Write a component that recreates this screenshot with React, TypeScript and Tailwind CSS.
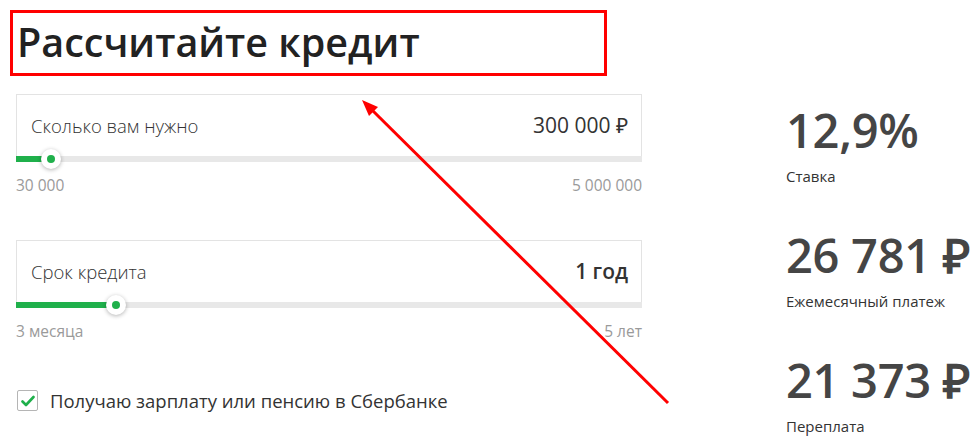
type SliderProps = {
  label: string;
  value: string;
  min: string;
  max: string;
  fill: number;
  valueBold?: boolean;
};

function SliderField({ label, value, min, max, fill, valueBold }: SliderProps) {
  return (
    <div>
      <div className="flex h-[62px] items-center justify-between border border-b-0 border-[#e3e3e3] pl-[14px] pr-[13px]">
        <span className="text-[18.5px] font-light text-[#333]">{label}</span>
        <span className={`text-[21px] text-[#333] ${valueBold ? "font-semibold" : "font-normal"}`}>{value}</span>
      </div>
      <div className="relative h-[6px] bg-[#e8e8e8]">
        <div className="h-full bg-[#1fb04b]" style={{ width: fill }} />
        <div
          className="absolute top-1/2 flex h-[20px] w-[20px] -translate-x-1/2 -translate-y-1/2 items-center justify-center rounded-full bg-white shadow-[0_1px_4px_rgba(0,0,0,0.3)]"
          style={{ left: fill }}
        >
          <div className="h-[8px] w-[8px] rounded-full bg-[#1fb04b]" />
        </div>
      </div>
      <div className="mt-[13px] flex justify-between text-[15.5px] leading-5 text-[#9a9a9a]">
        <span>{min}</span>
        <span>{max}</span>
      </div>
    </div>
  );
}

function Stat({ value, label }: { value: string; label: string }) {
  return (
    <div className="whitespace-nowrap">
      <div className="text-[47px] font-semibold leading-[60px] tracking-[-0.3px] text-[#454545]">{value}</div>
      <div className="mt-[6px] text-[15px] leading-5 text-[#333]">{label}</div>
    </div>
  );
}

export default function App() {
  return (
    <div className="relative h-[444px] w-[976px] overflow-hidden bg-white pl-[10px] pt-[10px] font-['Open_Sans',sans-serif] text-[#333]">
      <h1 className="flex h-[66px] w-[597px] items-center border-[3px] border-[#ff0000] pl-[4px] text-[39.5px] font-semibold text-[#222]">
        Рассчитайте кредит
      </h1>

      <div className="mt-[18px] flex pl-[6px]">
        <div className="w-[626px] shrink-0">
          <SliderField label="Сколько вам нужно" value="300 000 ₽" min="30 000" max="5 000 000" fill={35} />
          <div className="mt-[45px]">
            <SliderField label="Срок кредита" value="1 год" min="3 месяца" max="5 лет" fill={100} valueBold />
          </div>
          <label className="mt-[46px] flex items-center gap-[12px] pl-[1px]">
            <span className="flex h-[21px] w-[21px] items-center justify-center rounded-[2px] border border-[#b5b5b5] bg-white">
              <svg width="14" height="12" viewBox="0 0 14 12">
                <path d="M1.5 6.5 L5 10 L12.5 2" fill="none" stroke="#1fb04b" strokeWidth="2.6" strokeLinecap="round" strokeLinejoin="round" />
              </svg>
            </span>
            <span className="text-[18.5px] text-[#333]">Получаю зарплату или пенсию в Сбербанке</span>
          </label>
        </div>

        <div className="ml-[144px] flex shrink-0 flex-col gap-[39px] pt-[6px]">
          <Stat value="12,9%" label="Ставка" />
          <Stat value="26 781 ₽" label="Ежемесячный платеж" />
          <Stat value="21 373 ₽" label="Переплата" />
        </div>
      </div>

      <svg className="pointer-events-none absolute left-0 top-0" width="976" height="444">
        <line x1="668" y1="403" x2="370" y2="108" stroke="#ff0000" strokeWidth="3" />
        <polygon points="362,100 378,107 369,116" fill="#ff0000" />
      </svg>
    </div>
  );
}
